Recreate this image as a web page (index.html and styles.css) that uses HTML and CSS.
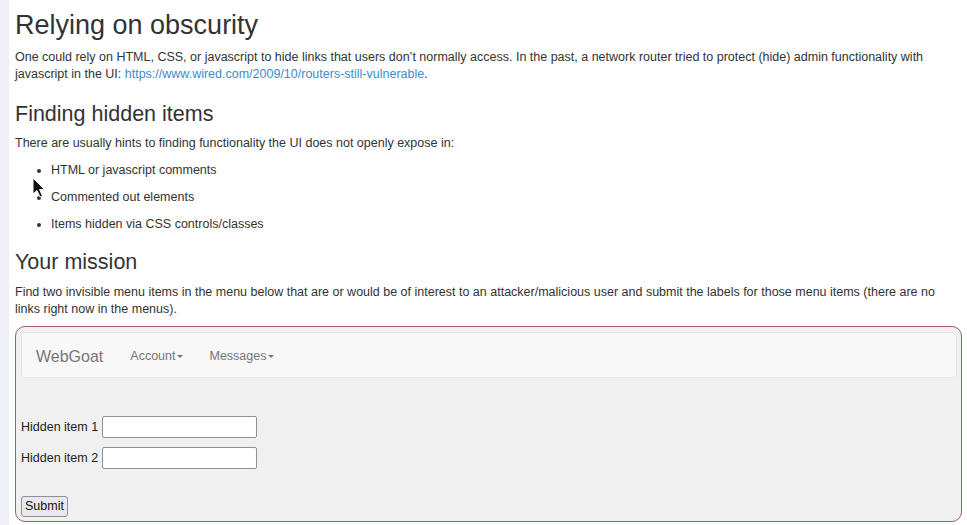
FILE: index.html
```html
<!DOCTYPE html>
<html lang="en">
<head>
<meta charset="utf-8">
<title>Relying on obscurity</title>
<link rel="stylesheet" href="styles.css">
</head>
<body>
<div class="page">
  <div class="strip"></div>
  <main class="content">
    <h2 class="title">Relying on obscurity</h2>
    <p class="text">One could rely on HTML, CSS, or javascript to hide links that users don’t normally access. In the past, a network router tried to protect (hide) admin functionality with javascript in the UI: <a class="link" href="#">https://www.wired.com/2009/10/routers-still-vulnerable</a>.</p>
    <h3 class="subtitle sub-first">Finding hidden items</h3>
    <p class="text">There are usually hints to finding functionality the UI does not openly expose in:</p>
    <ul class="hints">
      <li>HTML or javascript comments</li>
      <li>Commented out elements</li>
      <li>Items hidden via CSS controls/classes</li>
    </ul>
    <h3 class="subtitle sub-second">Your mission</h3>
    <p class="text">Find two invisible menu items in the menu below that are or would be of interest to an attacker/malicious user and submit the labels for those menu items (there are no links right now in the menus).</p>
    <div class="box">
      <nav class="navbar">
        <span class="brand">WebGoat</span>
        <span class="menu">Account<span class="caret"></span></span>
        <span class="menu">Messages<span class="caret"></span></span>
      </nav>
      <form class="form">
        <div class="row"><label class="lbl">Hidden item 1</label><input class="field" type="text"></div>
        <div class="row"><label class="lbl">Hidden item 2</label><input class="field" type="text"></div>
        <div class="actions"><button class="btn" type="button">Submit</button></div>
      </form>
    </div>
  </main>
  <svg class="cursor" width="14" height="22" viewBox="0 0 14 22" aria-hidden="true">
    <path d="M1 1 L1 17 L5 13.5 L8 20 L10.5 19 L7.6 12.6 L12.5 12.6 Z" fill="#111" stroke="#fff" stroke-width="1" stroke-linejoin="round"/>
  </svg>
</div>
</body>
</html>
```
FILE: styles.css
```css
html, body {
  margin: 0;
  padding: 0;
  background: #fff;
}
body {
  font-family: "Liberation Sans", Arial, Helvetica, sans-serif;
  color: #333;
  font-size: 12.5px;
  line-height: 17px;
}
.page {
  display: flex;
  min-height: 525px;
  position: relative;
}
.strip {
  width: 9px;
  flex: 0 0 9px;
  background: #eef0f6;
}
.content {
  flex: 1;
  padding: 0 5px 0 6px;
  overflow: hidden;
}
.title {
  font-size: 27px;
  line-height: 31px;
  font-weight: 500;
  margin: 10px 0 8px;
  color: #333;
}
.text {
  margin: 0;
}
.link {
  color: #428bca;
  text-decoration: none;
}
.subtitle {
  font-size: 21.5px;
  line-height: 24px;
  font-weight: 500;
  margin: 19px 0 9px;
}
.sub-second {
  margin: 17px 0 10px;
}
.hints {
  margin: 10px 0 0;
  padding-left: 36px;
}
.hints li {
  margin-bottom: 10px;
}
.hints li:last-child {
  margin-bottom: 0;
}
.box {
  margin-top: 8px;
  border: 1px solid #a0605f;
  border-radius: 10px;
  background: #f0f0f0;
  padding: 5px 4px 4px 5px;
}
.navbar {
  display: flex;
  align-items: center;
  box-sizing: border-box;
  height: 46px;
  background: #f8f8f8;
  border: 1px solid #e6e6e6;
  border-radius: 4px;
  padding: 3px 14px 0;
}
.brand {
  font-size: 16px;
  color: #777;
  margin-right: 27px;
}
.menu {
  color: #777;
  margin-right: 26px;
  display: inline-flex;
  align-items: center;
}
.caret {
  display: inline-block;
  width: 0;
  height: 0;
  margin-left: 2px;
  border-top: 3.5px solid #777;
  border-left: 3.5px solid transparent;
  border-right: 3.5px solid transparent;
}
.form {
  margin: 38px 0 0;
}
.row {
  display: flex;
  align-items: center;
  margin-bottom: 9px;
}
.lbl {
  margin-right: 4px;
  color: #222;
}
.field {
  width: 155px;
  height: 22px;
  box-sizing: border-box;
  border: 1px solid #8f8f9d;
  border-radius: 2px;
  background: #fff;
  padding: 0 4px;
  margin: 0;
  font: inherit;
}
.actions {
  margin-top: 27px;
}
.btn {
  height: 21px;
  box-sizing: border-box;
  padding: 0 3px;
  border: 1px solid #8f8f9d;
  border-radius: 3px;
  background: #e9e9ed;
  font: inherit;
  font-size: 12.5px;
  color: #111;
  margin: 0;
}
.cursor {
  position: absolute;
  left: 32px;
  top: 177px;
}
```
